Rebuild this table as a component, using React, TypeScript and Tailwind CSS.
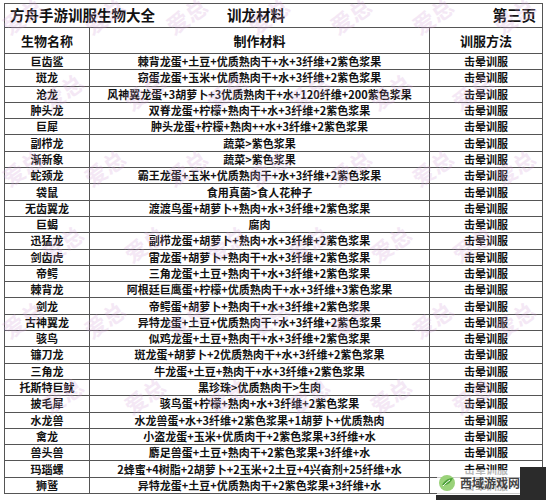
const rows: [string, string][] = [
  ["巨齿鲨", "棘背龙蛋+土豆+优质熟肉干+水+3纤维+2紫色浆果"],
  ["斑龙", "窃蛋龙蛋+玉米+优质熟肉干+水+3纤维+2紫色浆果"],
  ["沧龙", "风神翼龙蛋+3胡萝卜+3优质熟肉干+水+120纤维+200紫色浆果"],
  ["肿头龙", "双脊龙蛋+柠檬+熟肉干+水+3纤维+2紫色浆果"],
  ["巨犀", "肿头龙蛋+柠檬+熟肉++水+3纤维+2紫色浆果"],
  ["副栉龙", "蔬菜>紫色浆果"],
  ["渐新象", "蔬菜>紫色浆果"],
  ["蛇颈龙", "霸王龙蛋+玉米+优质熟肉干+水+3纤维+2紫色浆果"],
  ["袋鼠", "食用真菌>食人花种子"],
  ["无齿翼龙", "渡渡鸟蛋+胡萝卜+熟肉+水+3纤维+2紫色浆果"],
  ["巨蝎", "腐肉"],
  ["迅猛龙", "副栉龙蛋+胡萝卜+熟肉+水+3纤维+2紫色浆果"],
  ["剑齿虎", "雷龙蛋+胡萝卜+熟肉干+水+3纤维+2紫色浆果"],
  ["帝鳄", "三角龙蛋+土豆+熟肉干+水+3纤维+2紫色浆果"],
  ["棘背龙", "阿根廷巨鹰蛋+柠檬+优质熟肉干+水+3纤维+3紫色浆果"],
  ["剑龙", "帝鳄蛋+胡萝卜+熟肉干+水+3纤维+2紫色浆果"],
  ["古神翼龙", "异特龙蛋+土豆+优质熟肉干+水+3纤维+2紫色浆果"],
  ["骇鸟", "似鸡龙蛋+土豆+熟肉干+水+3纤维+2紫色浆果"],
  ["镰刀龙", "斑龙蛋+胡萝卜+2优质熟肉干+水+3纤维+2紫色浆果"],
  ["三角龙", "牛龙蛋+土豆+熟肉干+水+3纤维+2紫色浆果"],
  ["托斯特巨鱿", "黑珍珠>优质熟肉干>生肉"],
  ["披毛犀", "骇鸟蛋+柠檬+熟肉+水+3纤维+2紫色浆果"],
  ["水龙兽", "水龙兽蛋+水+3纤维+2紫色浆果+1胡萝卜+优质熟肉"],
  ["禽龙", "小盗龙蛋+玉米+优质肉干+2紫色浆果+3纤维+水"],
  ["兽头兽", "麝足兽蛋+土豆+熟肉干+2紫色浆果+3纤维+水"],
  ["玛瑙螺", "2蜂蜜+4树脂+2胡萝卜+2玉米+2土豆+4兴奋剂+25纤维+水"],
  ["狮鹫", "异特龙蛋+土豆+优质熟肉干+2紫色浆果+3纤维+水"],
]

// watermark spots (x, y) scattered over the sheet
const marks: [number, number][] = []
for (let r = 0; r < 7; r++) {
  for (let c = 0; c < 7; c++) {
    const x = c * 82 + (r % 2 ? 40 : 0)
    const y = r * 76 + 4
    if (x < 500 && y < 460) marks.push([x, y])
  }
}

export default function App() {
  return (
    <div className="relative w-[546px] h-[500px] overflow-hidden bg-white font-['Noto_Sans_CJK_SC','Noto_Sans',sans-serif] text-[#111]">
      <div className="pt-[3px] pl-[4px]">
        <table className="w-[538px] border-collapse table-fixed">
          <colgroup>
            <col className="w-[85px]" />
            <col className="w-[340px]" />
            <col className="w-[113px]" />
          </colgroup>
          <tbody>
            <tr className="h-[24px]">
              <td colSpan={3} className="border border-[#555] p-0">
                <div className="flex items-center font-bold text-[14.5px] leading-none">
                  <span className="pl-[5px]">方舟手游训服生物大全</span>
                  <span className="ml-[72px]">训龙材料</span>
                  <span className="ml-auto pr-[6px]">第三页</span>
                </div>
              </td>
            </tr>
            <tr className="h-[26px] text-[13px] font-bold">
              <td className="border border-[#555] text-center p-0">生物名称</td>
              <td className="border border-[#555] text-center p-0">制作材料</td>
              <td className="border border-[#555] text-center p-0">训服方法</td>
            </tr>
            {rows.map(([name, mat]) => (
              <tr key={name + mat} className="h-[16.3px] text-[11px] leading-none font-semibold">
                <td className="border border-[#555] text-center p-0 whitespace-nowrap">{name}</td>
                <td className="border border-[#555] text-center p-0 whitespace-nowrap">{mat}</td>
                <td className="border border-[#555] text-center p-0 whitespace-nowrap">击晕训服</td>
              </tr>
            ))}
          </tbody>
        </table>
      </div>

      {/* watermark */}
      <div className="pointer-events-none absolute inset-0">
        {marks.map(([x, y], i) => (
          <span
            key={i}
            className="absolute -rotate-[35deg] text-[22px] font-bold leading-none text-[#d6a6da] opacity-25"
            style={{ left: x, top: y }}
          >
            爱总
          </span>
        ))}
      </div>

      {/* site logo corner */}
      <div className="absolute right-0 top-[467px] w-[26px] h-[33px] bg-[#2b2b2b]" />
      <div className="absolute right-0 bottom-0 w-[110px] h-[5px] bg-[#2b2b2b]" />
      <div className="absolute left-[437px] top-[470px] w-[83px] h-[25px] flex items-center gap-[3px] bg-white/70">
        <svg width="20" height="20" viewBox="0 0 20 20">
          <circle cx="10" cy="10" r="8" fill="#9ad27a" />
          <path d="M5 12c3-6 8-7 11-7-2 4-5 8-11 7z" fill="#4fa33a" />
          <path d="M6 13c2-2 4-4 7-6" stroke="#fff" strokeWidth="1" fill="none" />
        </svg>
        <span className="text-[12px] font-bold text-[#444] leading-none">西域游戏网</span>
      </div>
    </div>
  )
}
